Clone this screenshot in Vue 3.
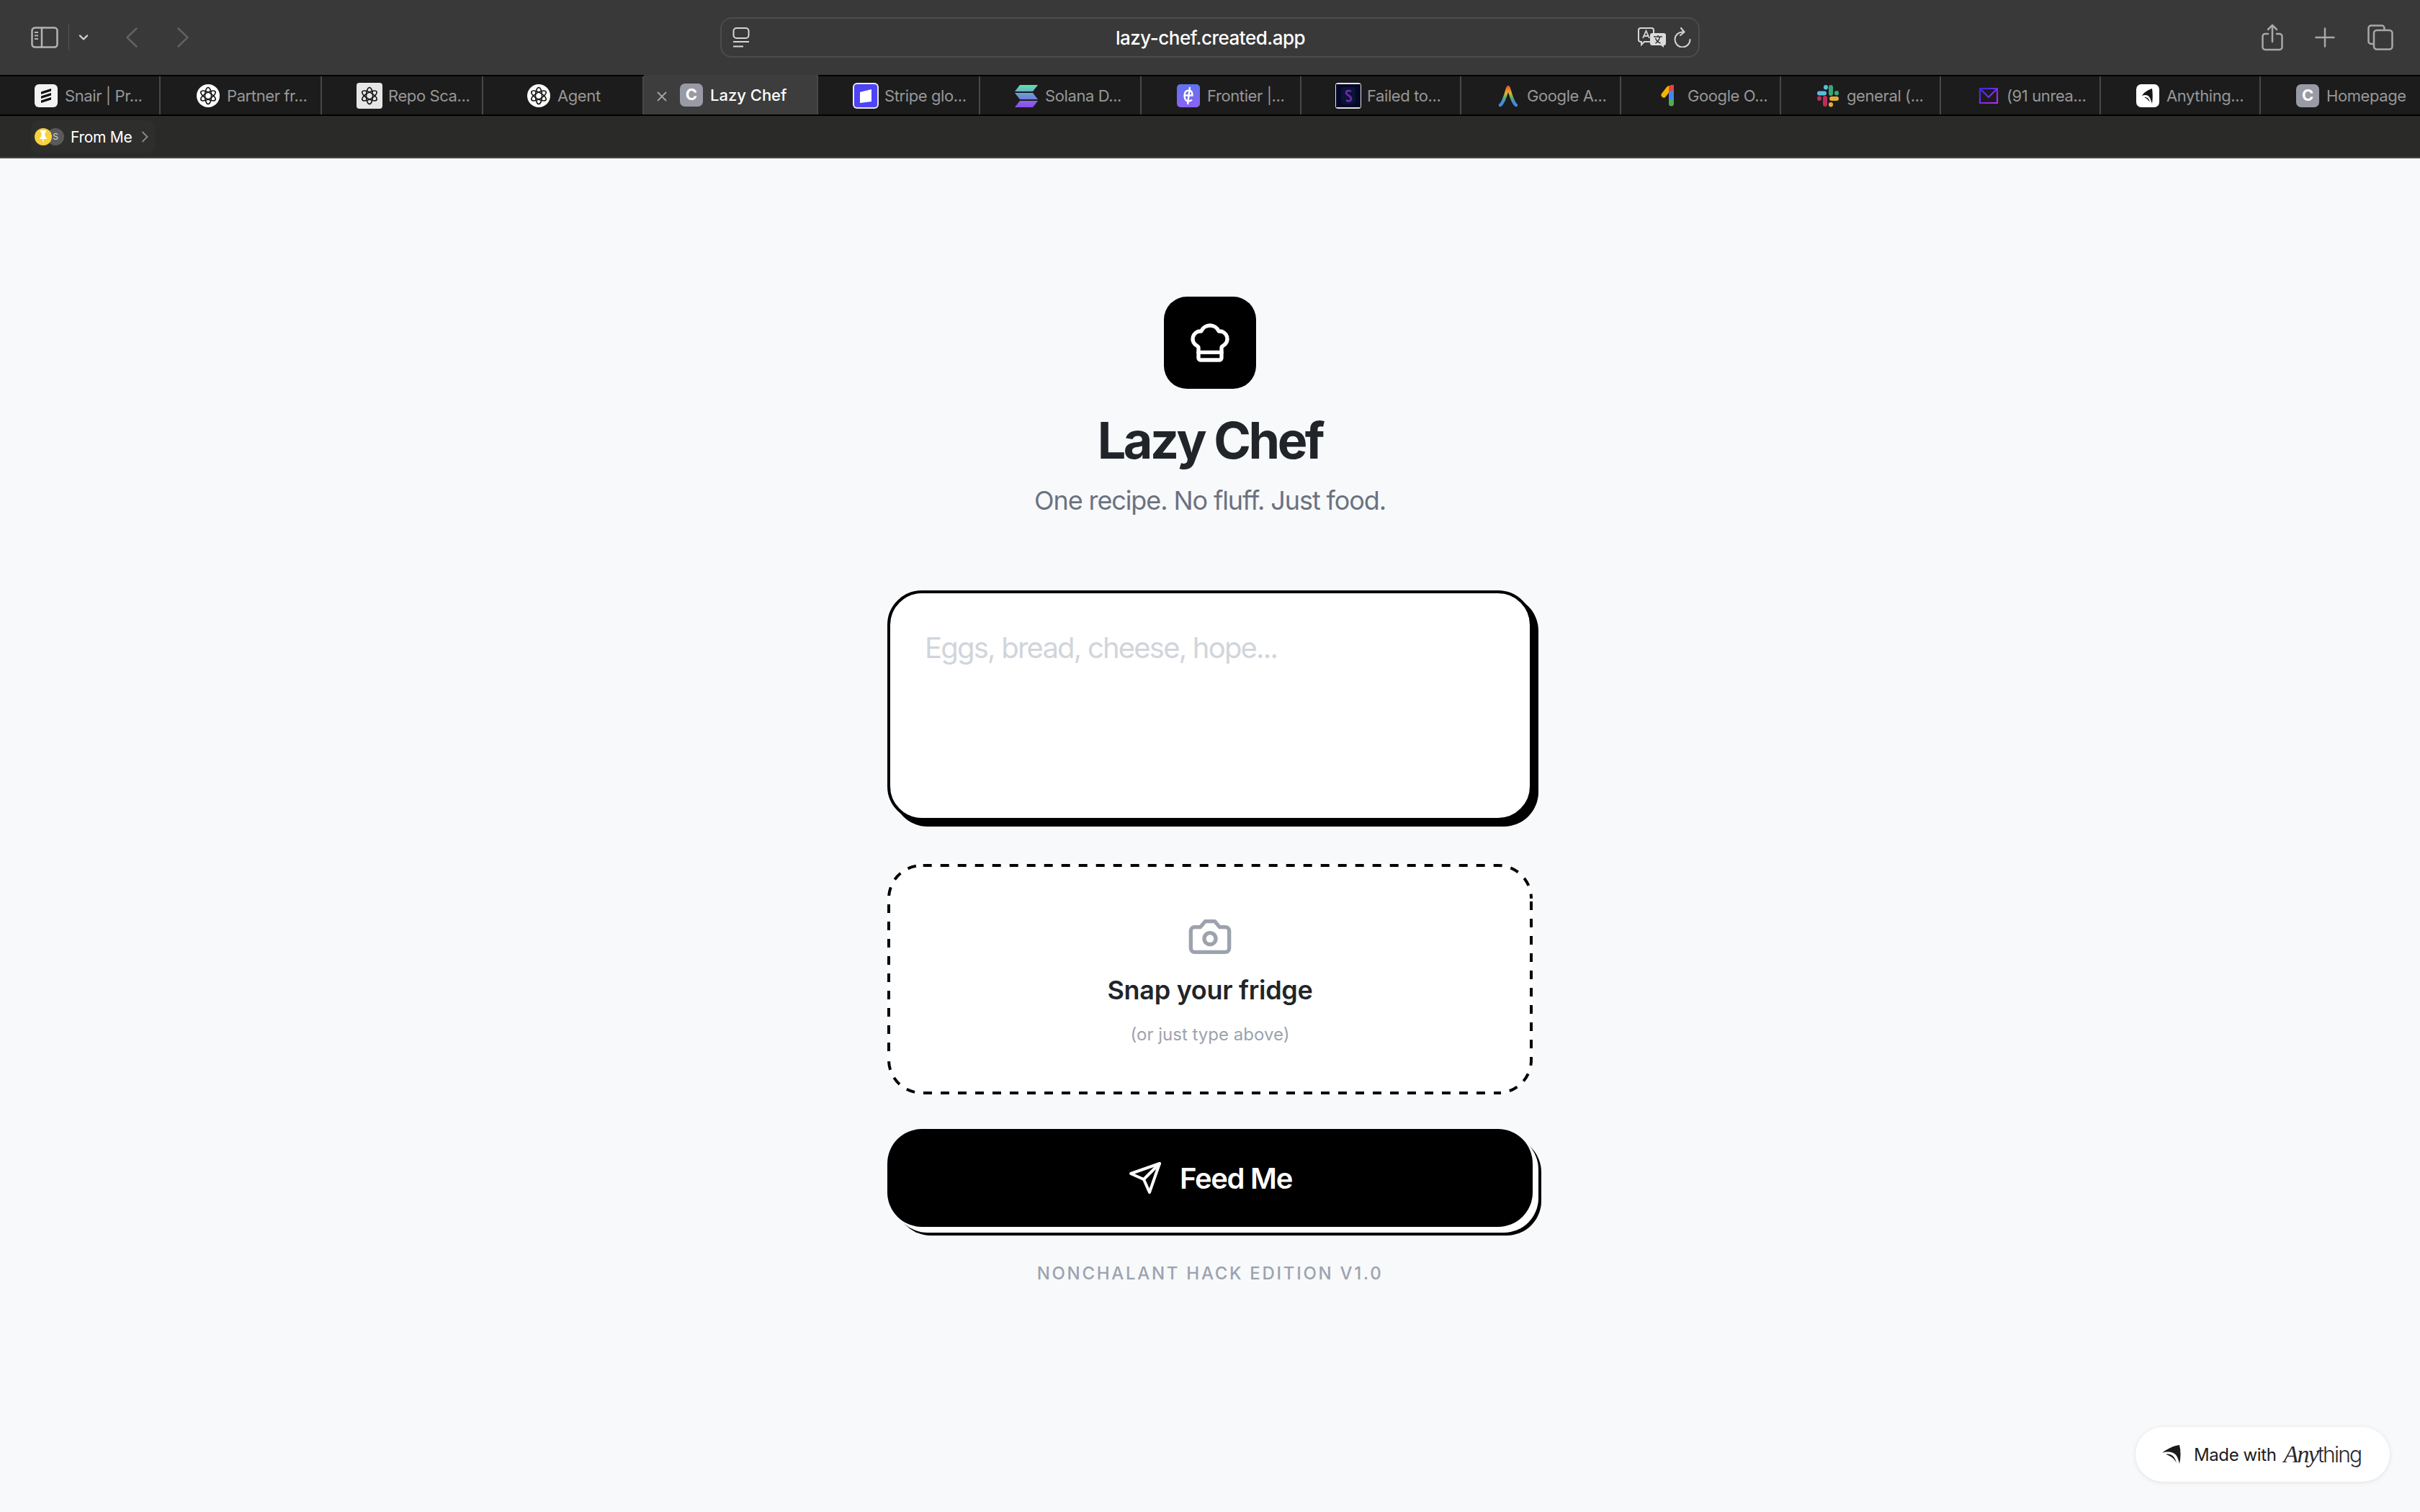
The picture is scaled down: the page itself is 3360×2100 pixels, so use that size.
<script setup>
const tabs = [
  { icon: 'snair', title: 'Snair | Pr...', width: 223, pad: 48 },
  { icon: 'openai', title: 'Partner fr...', width: 224, pad: 50 },
  { icon: 'openai-grey', title: 'Repo Sca...', width: 224, pad: 50 },
  { icon: 'openai', title: 'Agent', width: 223, pad: 61 },
  { icon: 'c', title: 'Lazy Chef', width: 242, pad: 50, active: true },
  { icon: 'stripe', title: 'Stripe glo...', width: 225, pad: 50 },
  { icon: 'solana', title: 'Solana D...', width: 224, pad: 48 },
  { icon: 'frontier', title: 'Frontier |...', width: 222, pad: 49 },
  { icon: 'failed', title: 'Failed to...', width: 222, pad: 49 },
  { icon: 'ads', title: 'Google A...', width: 222, pad: 49 },
  { icon: 'one', title: 'Google O...', width: 222, pad: 50 },
  { icon: 'slack', title: 'general (...', width: 222, pad: 49 },
  { icon: 'mail', title: '(91 unrea...', width: 222, pad: 49 },
  { icon: 'anything', title: 'Anything...', width: 222, pad: 49 },
  { icon: 'c', title: 'Homepage', width: 221, pad: 49 }
]
</script>

<template>
  <div class="window">
    <header class="toolbar">
      <div class="nav">
        <svg class="sidebar-icon" width="38" height="30" viewBox="0 0 38 30" fill="none" stroke="#b4b4b4" stroke-width="2.5">
          <rect x="1.5" y="1.5" width="35" height="27" rx="4" />
          <path d="M15 2v26" />
          <path d="M5 8h5M5 12.5h5M5 17h5" stroke-width="2" />
        </svg>
        <span class="nav-divider"></span>
        <svg width="14" height="8" viewBox="0 0 14 8" fill="none" stroke="#d0d0d0" stroke-width="2.4" stroke-linecap="round" stroke-linejoin="round">
          <path d="M2 1.5 7 6.5 12 1.5" />
        </svg>
        <svg class="back" width="16" height="28" viewBox="0 0 16 28" fill="none" stroke="#626262" stroke-width="2.5" stroke-linecap="round" stroke-linejoin="round">
          <path d="M14.5 1.5 1.5 14l13 12.5" />
        </svg>
        <svg class="forward" width="16" height="28" viewBox="0 0 16 28" fill="none" stroke="#626262" stroke-width="2.5" stroke-linecap="round" stroke-linejoin="round">
          <path d="M1.5 1.5 14.5 14 1.5 26.5" />
        </svg>
      </div>

      <div class="address">
        <svg width="24" height="28" viewBox="0 0 24 28" fill="none" stroke="#d6d6d6" stroke-width="2">
          <rect x="1.5" y="1" width="21" height="14" rx="4" />
          <path d="M1 20h22" />
          <path d="M1 26.5h14" />
        </svg>
        <span class="url">lazy-chef.created.app</span>
        <svg class="translate" width="40" height="28" viewBox="0 0 40 28" fill="none">
          <path d="M4 1h15a3 3 0 0 1 3 3v13a3 3 0 0 1-3 3H9l-4 4v-4H4a3 3 0 0 1-3-3V4a3 3 0 0 1 3-3z" stroke="#d6d6d6" stroke-width="2" />
          <path d="M7 15 11.500 5l4.500 10M8.500 12h6" stroke="#d6d6d6" stroke-width="1.800" />
          <path d="M20 8h16a3 3 0 0 1 3 3v11a3 3 0 0 1-3 3v3l-4-3H20a3 3 0 0 1-3-3V11a3 3 0 0 1 3-3z" fill="#dcdcdc" />
          <path d="M22 13h12M28 11v2M24.500 22c3-1.500 5-4.500 6-9M24.500 15c1 3 4 6 7 7" stroke="#383838" stroke-width="1.600" />
        </svg>
        <svg class="reload" width="24" height="28" viewBox="0 0 24 28" fill="none" stroke="#d6d6d6" stroke-width="2" stroke-linecap="round" stroke-linejoin="round">
          <path d="M13 6.500a10.500 10.500 0 1 0 9.500 10.500" />
          <path d="m10 1 4.500 5.500L9 11" />
        </svg>
      </div>

      <div class="actions">
        <svg width="30" height="38" viewBox="0 0 30 38" fill="none" stroke="#a8a8a8" stroke-width="2.500" stroke-linecap="round" stroke-linejoin="round">
          <path d="M9 14H5a3.500 3.500 0 0 0-3.500 3.500v15A3.500 3.500 0 0 0 5 36h20a3.500 3.500 0 0 0 3.500-3.500v-15A3.500 3.500 0 0 0 25 14h-4" />
          <path d="M15 25V2M9 8l6-6 6 6" />
        </svg>
        <svg class="plus" width="28" height="28" viewBox="0 0 28 28" fill="none" stroke="#a8a8a8" stroke-width="2.500" stroke-linecap="round">
          <path d="M14 1.500v25M1.500 14h25" />
        </svg>
        <svg class="copies" width="36" height="36" viewBox="0 0 36 36" fill="none" stroke="#a8a8a8" stroke-width="2.500">
          <path d="M8 27H5a3.500 3.500 0 0 1-3.500-3.500V5A3.500 3.500 0 0 1 5 1.500h15A3.500 3.500 0 0 1 23.500 5v3" />
          <rect x="9" y="8" width="25.500" height="26.500" rx="4" />
        </svg>
      </div>
    </header>

    <nav class="tabbar">
      <div
        v-for="tab in tabs"
        :key="tab.title"
        class="tab"
        :class="{ active: tab.active }"
        :style="{ width: tab.width + 'px', paddingLeft: tab.pad + 'px' }"
      >
        <svg v-if="tab.active" class="close" width="16" height="16" viewBox="0 0 16 16" fill="none" stroke="#a4a4a4" stroke-width="1.800">
          <path d="m2 2 12 12M14 2 2 14" />
        </svg>

        <svg class="favicon" width="32" height="32" viewBox="0 0 32 32">
          <template v-if="tab.icon === 'snair'">
            <rect width="32" height="32" rx="6" fill="#f3f3f3" />
            <path d="M9 10.500 23 6v3.500L9 14zM9 16.500 23 12v3.500L9 20zM9 22.500 23 18v3.500L9 26z" fill="#111" />
          </template>
          <template v-else-if="tab.icon === 'openai' || tab.icon === 'openai-grey'">
            <rect v-if="tab.icon === 'openai-grey'" x="-2" y="-2" width="36" height="36" rx="4" fill="#e6e6e6" />
            <circle v-else cx="16" cy="16" r="16" fill="#fff" />
            <g fill="none" stroke="#161616" stroke-width="1.600">
              <ellipse cx="16" cy="16" rx="4.500" ry="11.500" />
              <ellipse cx="16" cy="16" rx="4.500" ry="11.500" transform="rotate(60 16 16)" />
              <ellipse cx="16" cy="16" rx="4.500" ry="11.500" transform="rotate(120 16 16)" />
            </g>
          </template>
          <template v-else-if="tab.icon === 'c'">
            <rect width="32" height="32" rx="7" fill="#9a9aa6" />
            <text x="16" y="23" text-anchor="middle" class="favicon-letter">C</text>
          </template>
          <template v-else-if="tab.icon === 'stripe'">
            <rect x="-2" y="-2" width="36" height="36" rx="6" fill="#e8e8e8" />
            <rect x="0" y="0" width="32" height="32" rx="4" fill="#4e43f7" />
            <path d="M8 11 24 7v17L8 26z" fill="#fff" />
          </template>
          <template v-else-if="tab.icon === 'solana'">
            <defs>
              <linearGradient id="solanaBars" x1="0" y1="0" x2="0" y2="1">
                <stop offset="0" stop-color="#62e2ac" />
                <stop offset="0.5" stop-color="#6b8fd6" />
                <stop offset="1" stop-color="#9346ef" />
              </linearGradient>
            </defs>
            <path d="M7 1h25l-7 9H0zM0 12h25l7 9H7zM7 23h25l-7 9H0z" fill="url(#solanaBars)" />
          </template>
          <template v-else-if="tab.icon === 'frontier'">
            <defs>
              <linearGradient id="frontierBg" x1="0" y1="0" x2="0" y2="1">
                <stop offset="0" stop-color="#5f74ee" />
                <stop offset="1" stop-color="#8b62f5" />
              </linearGradient>
            </defs>
            <rect width="32" height="32" rx="5" fill="url(#frontierBg)" />
            <path d="M21 21.500c-1.500 1.500-3 2-4.500 2-4 0-6-3-6-7.500s2-7.500 6-7.500 5 3 5 7H11M18 4l-3 24" fill="none" stroke="#fff" stroke-width="2.400" />
          </template>
          <template v-else-if="tab.icon === 'failed'">
            <rect x="-2" y="-2" width="36" height="36" rx="4" fill="#e4e4e4" />
            <rect x="-1" y="0" width="34" height="32" fill="#060828" />
            <rect x="6" y="4" width="20" height="24" rx="5" fill="#0c1238" />
            <path d="M20 10c-3-2-7-1-7 2s7 4 7 8-5 4-7 2" fill="none" stroke="#6a2ea8" stroke-width="2.600" />
          </template>
          <template v-else-if="tab.icon === 'ads'">
            <defs>
              <linearGradient id="adsStroke" gradientUnits="userSpaceOnUse" x1="16" y1="2" x2="16" y2="30">
                <stop offset="0" stop-color="#e0503a" />
                <stop offset="0.35" stop-color="#e8b030" />
                <stop offset="0.6" stop-color="#58b070" />
                <stop offset="0.85" stop-color="#4288e8" />
              </linearGradient>
            </defs>
            <path d="M5 29c3-2 5-7 7-13 2-5 3-12 4-12s2 7 4 12c2 6 4 11 7 13" fill="none" stroke="url(#adsStroke)" stroke-width="4.500" stroke-linecap="round" />
          </template>
          <template v-else-if="tab.icon === 'one'">
            <path d="M9 15 16 6" stroke="#f4b400" stroke-width="7" stroke-linecap="round" />
            <path d="M16 5c0-2.500 2-4 4-4h3v9h-7z" fill="#ea4335" />
            <rect x="16" y="9" width="7" height="13" fill="#4285f4" />
            <path d="M16 21h7v6a3.500 3.500 0 0 1-7 0z" fill="#4caf50" />
          </template>
          <template v-else-if="tab.icon === 'slack'">
            <g fill="none" stroke-width="6" stroke-linecap="round">
              <path d="M4 12.500h7" stroke="#59bde0" />
              <path d="M13 4v.500" stroke="#59bde0" />
              <path d="M20 4v9" stroke="#3aa57b" />
              <path d="M28 12v.500" stroke="#3aa57b" />
              <path d="M21 20h7" stroke="#e0ac3c" />
              <path d="M20 28v.500" stroke="#e0ac3c" />
              <path d="M12 19v9" stroke="#c42a57" />
              <path d="M4 19.500v.500" stroke="#c42a57" />
            </g>
          </template>
          <template v-else-if="tab.icon === 'mail'">
            <defs>
              <linearGradient id="mailStroke" x1="0" y1="0" x2="1" y2="1">
                <stop offset="0" stop-color="#3a2ae0" />
                <stop offset="1" stop-color="#b92cf0" />
              </linearGradient>
            </defs>
            <path d="M5 6h24v20H5zM5 6l12 12L29 6" fill="none" stroke="url(#mailStroke)" stroke-width="2.200" />
          </template>
          <template v-else-if="tab.icon === 'anything'">
            <rect width="32" height="32" rx="7" fill="#fff" />
            <path d="M22 6C16 8 11 11 8 16c5-2 9-1 11 3 1 2 2 5 3 8 1-7 1-14 0-21z" fill="#161616" />
            <path d="M11 18c4-.500 7 2 8 7-2-3-4-5-8-7z" fill="#161616" />
          </template>
        </svg>
        <span class="tab-title">{{ tab.title }}</span>
      </div>
    </nav>

    <div class="bookmarks">
      <div class="bookmark">
        <span class="bookmark-icons">
          <span class="icon-back">S</span>
          <span class="icon-front">
            <svg width="12" height="18" viewBox="0 0 12 18" fill="#fff">
              <path d="M2 0h8v2L8.500 3.500V8L11 11v1H7l-1 6-1-6H1v-1l2.500-3V3.500L2 2z" />
            </svg>
          </span>
        </span>
        <span class="bookmark-label">From Me</span>
        <svg width="10" height="18" viewBox="0 0 10 18" fill="none" stroke="#8c8c8c" stroke-width="1.800">
          <path d="m1.500 2 7 7-7 7" />
        </svg>
      </div>
    </div>

    <main class="page">
      <div class="logo">
        <svg width="64" height="64" viewBox="0 0 24 24" fill="none" stroke="#fff" stroke-width="2" stroke-linecap="round" stroke-linejoin="round">
          <path d="M17 21a1 1 0 0 0 1-1v-5.350c0-.457.316-.844.727-1.041a4 4 0 0 0-2.134-7.589 5 5 0 0 0-9.186 0 4 4 0 0 0-2.134 7.588c.411.198.727.585.727 1.041V20a1 1 0 0 0 1 1Z" />
          <path d="M6 17h12" />
        </svg>
      </div>
      <h1 class="title">Lazy Chef</h1>
      <p class="subtitle">One recipe. No fluff. Just food.</p>

      <div class="form">
        <textarea class="ingredients" placeholder="Eggs, bread, cheese, hope..."></textarea>

        <div class="dropzone">
          <svg class="dash" width="896" height="320" viewBox="0 0 896 320" fill="none" stroke="#000" stroke-width="4" stroke-dasharray="12 12">
            <path d="M48 2H848A46 46 0 0 1 894 48" stroke-dashoffset="-1.700" />
            <path d="M894 48V272A46 46 0 0 1 848 318" stroke-dashoffset="-4" />
            <path d="M848 318H48A46 46 0 0 1 2 272" stroke-dashoffset="-18" />
            <path d="M2 272V48A46 46 0 0 1 48 2" stroke-dashoffset="-12" />
          </svg>
          <svg width="64" height="64" viewBox="0 0 24 24" fill="none" stroke="#9ca3af" stroke-width="2" stroke-linecap="round" stroke-linejoin="round">
            <path d="M14.500 4h-5L7 7H4a2 2 0 0 0-2 2v9a2 2 0 0 0 2 2h16a2 2 0 0 0 2-2V9a2 2 0 0 0-2-2h-3l-2.500-3z" />
            <circle cx="12" cy="13" r="3" />
          </svg>
          <span class="snap">Snap your fridge</span>
          <span class="hint">(or just type above)</span>
        </div>

        <button class="feed" type="button">
          <svg width="48" height="48" viewBox="0 0 24 24" fill="none" stroke="#fff" stroke-width="2" stroke-linecap="round" stroke-linejoin="round">
            <path d="m22 2-7 20-4-9-9-4Z" />
            <path d="M22 2 11 13" />
          </svg>
          <span>Feed Me</span>
        </button>

        <p class="edition">NONCHALANT HACK EDITION V1.0</p>
      </div>

      <div class="made-with">
        <svg width="28" height="28" viewBox="0 0 28 28">
          <path d="M25 1C17 2 8 6 1 12c7-2.500 16-2 20 4 2 3 3 7 4 11 2-8 2-18 0-26z" fill="#1a1a1a" />
          <path d="M6 14c6-1.500 12 1 15 12-3-6-8-10-15-12z" fill="#1a1a1a" />
        </svg>
        <span class="made-label">Made with</span>
        <span class="brand"><em>Any</em>thing</span>
      </div>
    </main>
  </div>
</template>

<style scoped>
.window {
  display: flex;
  flex-direction: column;
  width: 3360px;
  height: 2100px;
  overflow: hidden;
  font-family: Inter, "Liberation Sans", sans-serif;
}

.toolbar {
  display: grid;
  grid-template-columns: 1000px 1360px 1fr;
  align-items: center;
  flex: 0 0 104px;
  background: #393939;
}

.nav {
  display: flex;
  align-items: center;
  padding-left: 43px;
}

.nav-divider {
  width: 1px;
  height: 36px;
  margin: 0 13px 0 14px;
  background: #555;
}

.back {
  margin-left: 52px;
}

.forward {
  margin-left: 55px;
}

.address {
  display: flex;
  align-items: center;
  height: 56px;
  padding: 0 10px 0 15px;
  border: 2px solid #4c4c4c;
  border-radius: 16px;
  box-sizing: border-box;
}

.url {
  flex: 1;
  padding-left: 46px;
  text-align: center;
  color: #fff;
  font-size: 26px;
  font-weight: 500;
  letter-spacing: -0.5px;
}

.reload {
  margin-left: 10px;
}

.actions {
  display: flex;
  align-items: center;
  padding-left: 780px;
}

.plus {
  margin-left: 44px;
}

.copies {
  margin-left: 45px;
}

.tabbar {
  display: flex;
  flex: 0 0 57px;
  box-sizing: border-box;
  background: #1c1c1c;
  border-top: 2px solid #000;
  border-bottom: 2px solid #000;
}

.tab {
  display: flex;
  flex: none;
  align-items: center;
  gap: 10px;
  box-sizing: border-box;
  border-right: 2px solid #484848;
  color: #979797;
  font-size: 22px;
  letter-spacing: -0.4px;
  white-space: nowrap;
}

.tab:last-child {
  border-right: 0;
}

.tab.active {
  position: relative;
  margin-top: -2px;
  background: #3d3d3d;
  color: #fff;
  font-weight: 500;
  letter-spacing: 0;
}

.close {
  position: absolute;
  left: 17px;
  top: 22px;
}

.favicon {
  flex: none;
  overflow: visible;
}

.favicon-letter {
  fill: #fff;
  font-family: Inter, sans-serif;
  font-size: 22px;
  font-weight: 700;
}

.bookmarks {
  display: flex;
  align-items: center;
  flex: 0 0 59px;
  box-sizing: border-box;
  padding-left: 43px;
  background: #2a2a29;
  border-bottom: 2px solid #454545;
}

.bookmark {
  display: flex;
  align-items: center;
  height: 46px;
  padding: 0 9px 0 5px;
  border-radius: 10px;
  background: #2e2e2d;
  color: #fff;
  font-size: 21px;
  letter-spacing: -0.3px;
}

.bookmark-icons {
  position: relative;
  width: 41px;
  height: 24px;
  margin-right: 9px;
}

.icon-back,
.icon-front {
  position: absolute;
  top: 0;
  display: flex;
  align-items: center;
  justify-content: center;
  width: 24px;
  height: 24px;
  border-radius: 50%;
}

.icon-back {
  left: 17px;
  background: #5a5a5a;
  color: #ddd;
  font-size: 12px;
}

.icon-front {
  left: 0;
  background: #f6d23c;
}

.bookmark-label {
  margin-right: 13px;
  padding-top: 2px;
}

.page {
  position: relative;
  display: flex;
  flex: 1;
  flex-direction: column;
  align-items: center;
  padding-top: 192px;
  background: #f8f9fb;
}

.logo {
  display: flex;
  align-items: center;
  justify-content: center;
  width: 128px;
  height: 128px;
  border-radius: 32px;
  background: #000;
}

.title {
  margin: 32px 0 0;
  color: #212529;
  font-size: 70px;
  font-weight: 700;
  line-height: 80px;
  letter-spacing: -3.5px;
}

.subtitle {
  margin: 19px 0 0;
  color: #6b7280;
  font-size: 36px;
  line-height: 48px;
  letter-spacing: -1.1px;
}

.form {
  display: flex;
  flex-direction: column;
  align-items: stretch;
  width: 896px;
  margin-top: 101px;
}

.ingredients {
  display: block;
  box-sizing: border-box;
  height: 320px;
  padding: 48px;
  border: 4px solid #000;
  border-radius: 48px;
  outline: none;
  resize: none;
  background: #fff;
  box-shadow: 8px 8px 0 #000;
  color: #212529;
  font-family: Inter, sans-serif;
  font-size: 40px;
  line-height: 56px;
  letter-spacing: -1.8px;
}

.ingredients::placeholder {
  color: #d1d5db;
  opacity: 1;
}

.dropzone {
  position: relative;
  display: flex;
  flex-direction: column;
  align-items: center;
  box-sizing: border-box;
  height: 320px;
  margin-top: 60px;
  padding-top: 69px;
  border-radius: 48px;
  background: #fff;
}

.dash {
  position: absolute;
  left: 0;
  top: 0;
}

.snap {
  margin-top: 18px;
  color: #212529;
  font-size: 36px;
  font-weight: 600;
  line-height: 48px;
  letter-spacing: -0.3px;
}

.hint {
  margin-top: 22px;
  color: #9ca3af;
  font-size: 24px;
  line-height: 32px;
}

.feed {
  display: flex;
  align-items: center;
  justify-content: center;
  gap: 24px;
  height: 136px;
  margin-top: 48px;
  border: 0;
  border-radius: 48px;
  background: #000;
  box-shadow: 8px 8px 0 #fff, 12px 12px 0 #000;
  color: #fff;
  font-family: Inter, sans-serif;
  font-size: 40px;
  font-weight: 600;
  letter-spacing: -1.3px;
}

.edition {
  margin: 49px 0 0;
  text-align: center;
  color: #9ca3af;
  font-size: 24px;
  font-weight: 500;
  line-height: 32px;
  letter-spacing: 2.7px;
}

.made-with {
  position: absolute;
  right: 42px;
  bottom: 42px;
  display: flex;
  align-items: center;
  box-sizing: border-box;
  width: 353px;
  height: 76px;
  padding-left: 36px;
  border-radius: 38px;
  background: #fff;
  box-shadow: 0 1px 6px rgba(0, 0, 0, 0.1);
}

.made-label {
  margin-left: 17px;
  color: #1c1c20;
  font-size: 24px;
  letter-spacing: -0.4px;
}

.brand {
  margin-left: 10px;
  color: #2a2a2e;
  font-size: 30px;
  font-weight: 300;
  letter-spacing: -0.06em;
}

.brand em {
  font-family: "Liberation Serif", serif;
  font-size: 34px;
}
</style>
